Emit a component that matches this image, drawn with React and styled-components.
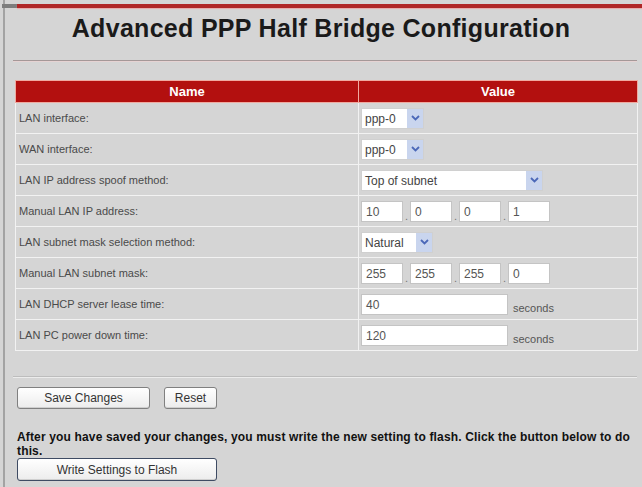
import React from 'react';
import styled, { createGlobalStyle } from 'styled-components';

const GlobalStyle = createGlobalStyle`
  html, body {
    margin: 0;
    padding: 0;
    background: #d5d5d5;
  }
  body {
    font-family: "Liberation Sans", Arial, sans-serif;
  }
`;

// page frame
const Page = styled.div`
  width: 642px;
  height: 487px;
  padding-left: 3px;
  box-sizing: border-box;
  background: #d5d5d5;
  overflow: hidden;
`;

const Frame = styled.div`
  height: 100%;
  border-left: 2px solid #a3a3a3;
  padding-top: 4px;
  box-sizing: border-box;
`;

const TopBar = styled.div`
  display: flex;
  height: 4px;
  margin-left: -3px;
`;

const TopBarStub = styled.div`
  width: 15px;
  background: #7d7d7d;
`;

const TopBarRed = styled.div`
  flex: 1;
  background: #b02626;
  box-shadow: 0 1px 1px #e7a9a9;
`;

const Title = styled.h1`
  margin: 6px 0 0;
  padding-right: 5px;
  text-align: center;
  font-size: 25px;
  line-height: 28px;
  font-weight: bold;
  letter-spacing: 0.3px;
  color: #1a1a1a;
`;

const Rule = styled.div`
  margin: ${(p) => p.top || 20}px 0 0 8px;
  width: 624px;
  height: 1px;
  background: ${(p) => p.color || '#a59898'};
  border-bottom: 1px solid ${(p) => p.shade || '#e6d3d3'};
`;

// config table
const Table = styled.table`
  margin: 18px 0 0 10px;
  width: 623px;
  border-collapse: collapse;
  border: 1px solid #f1f1f1;
  table-layout: fixed;
`;

const HeadCell = styled.th`
  height: 21px;
  padding: 0;
  background: #b3100f;
  border: 1px solid #f0aaa0;
  color: #fff;
  font-size: 13px;
  font-weight: bold;
  text-align: center;
  width: ${(p) => p.width || 'auto'};
`;

const Row = styled.tr`
  height: 31px;
`;

const LabelCell = styled.td`
  padding: 0 0 0 3px;
  border: 1px solid #f2f2f2;
  font-size: 11px;
  color: #4a4a4a;
  vertical-align: middle;
`;

const ValueCell = styled.td`
  padding: 0 0 0 2px;
  border: 1px solid #f2f2f2;
  vertical-align: middle;
`;

const Field = styled.div`
  display: flex;
  align-items: center;
`;

const Input = styled.div`
  width: ${(p) => p.width}px;
  height: 21px;
  box-sizing: border-box;
  background: #fff;
  border: 1px solid #c4c4c4;
  padding: 3px 0 0 4px;
  font-size: 12px;
  color: #555;
`;

const Dot = styled.span`
  width: 7px;
  align-self: flex-end;
  text-align: center;
  font-size: 11px;
  line-height: 12px;
  color: #777;
`;

const Unit = styled.span`
  margin-left: 5px;
  margin-top: 7px;
  font-size: 11px;
  color: #555;
`;

const Select = styled.div`
  width: ${(p) => p.width}px;
  height: 21px;
  box-sizing: border-box;
  display: flex;
  background: #fff;
  border: 1px solid #d0d0d0;
`;

const SelectText = styled.span`
  flex: 1;
  padding: 3px 0 0 3px;
  font-size: 12px;
  color: #444;
`;

const SelectArrow = styled.span`
  width: 16px;
  display: flex;
  align-items: center;
  justify-content: center;
  background: #c9d5ee;
`;

const Buttons = styled.div`
  display: flex;
  gap: 14px;
  margin: 9px 0 0 12px;
`;

const Button = styled.button`
  width: ${(p) => p.width}px;
  height: ${(p) => p.height || 22}px;
  padding: 0;
  font-family: "Liberation Sans", Arial, sans-serif;
  font-size: 12px;
  color: #333;
  background: linear-gradient(#ffffff, #ececec);
  border: 1px solid ${(p) => p.edge || '#808080'};
  border-radius: 3px;
  box-shadow: inset 0 -1px 0 #cfcfcf;
`;

const Note = styled.p`
  margin: 21px 0 0 12px;
  width: 622px;
  font-size: 12px;
  line-height: 14px;
  font-weight: bold;
  letter-spacing: 0.15px;
  color: #111;
`;

const FlashRow = styled.div`
  margin: 0 0 0 12px;
`;

const Chevron = () => (
  <svg width="9" height="6" viewBox="0 0 9 6">
    <path d="M1 1 L4.5 4.5 L8 1" fill="none" stroke="#4b68b8" strokeWidth="1.8" />
  </svg>
);

const rows = [
  { label: 'LAN interface:', type: 'select', value: 'ppp-0', width: 63 },
  { label: 'WAN interface:', type: 'select', value: 'ppp-0', width: 63 },
  { label: 'LAN IP address spoof method:', type: 'select', value: 'Top of subnet', width: 182 },
  { label: 'Manual LAN IP address:', type: 'quad', values: ['10', '0', '0', '1'] },
  { label: 'LAN subnet mask selection method:', type: 'select', value: 'Natural', width: 72 },
  { label: 'Manual LAN subnet mask:', type: 'quad', values: ['255', '255', '255', '0'] },
  { label: 'LAN DHCP server lease time:', type: 'time', value: '40' },
  { label: 'LAN PC power down time:', type: 'time', value: '120' },
];

const renderValue = (row) => {
  if (row.type === 'select') {
    return (
      <Select width={row.width}>
        <SelectText>{row.value}</SelectText>
        <SelectArrow>
          <Chevron />
        </SelectArrow>
      </Select>
    );
  }
  if (row.type === 'quad') {
    return (
      <Field>
        {row.values.map((v, i) => (
          <React.Fragment key={i}>
            {i > 0 && <Dot>.</Dot>}
            <Input width={42}>{v}</Input>
          </React.Fragment>
        ))}
      </Field>
    );
  }
  return (
    <Field>
      <Input width={147}>{row.value}</Input>
      <Unit>seconds</Unit>
    </Field>
  );
};

const App = () => (
  <Page>
    <GlobalStyle />
    <Frame>
      <TopBar>
        <TopBarStub />
        <TopBarRed />
      </TopBar>
      <Title>Advanced PPP Half Bridge Configuration</Title>
      <Rule top={18} />
      <Table>
        <thead>
          <tr>
            <HeadCell width="342px">Name</HeadCell>
            <HeadCell>Value</HeadCell>
          </tr>
        </thead>
        <tbody>
          {rows.map((row) => (
            <Row key={row.label}>
              <LabelCell>{row.label}</LabelCell>
              <ValueCell>{renderValue(row)}</ValueCell>
            </Row>
          ))}
        </tbody>
      </Table>
      <Rule top={25} color="#bdbdbd" shade="#ececec" />
      <Buttons>
        <Button width={133}>Save Changes</Button>
        <Button width={53}>Reset</Button>
      </Buttons>
      <Note>
        After you have saved your changes, you must write the new setting to flash. Click the button below to do this.
      </Note>
      <FlashRow>
        <Button width={200} height={23} edge="#3e4b63">
          Write Settings to Flash
        </Button>
      </FlashRow>
    </Frame>
  </Page>
);

export default App;
